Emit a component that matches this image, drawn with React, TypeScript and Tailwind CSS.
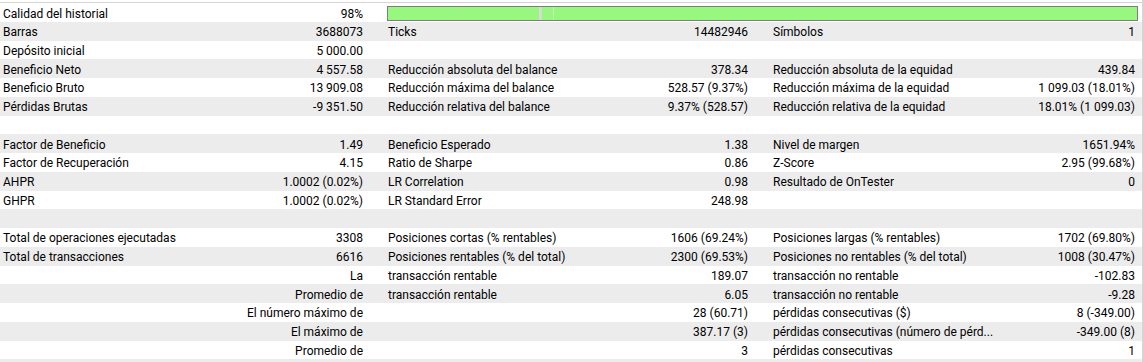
import React from 'react'

type Row = string[]

const rows: Row[] = [
  ['Barras', '3688073', 'Ticks', '14482946', 'Símbolos', '1'],
  ['Depósito inicial', '5 000.00', '', '', '', ''],
  ['Beneficio Neto', '4 557.58', 'Reducción absoluta del balance', '378.34', 'Reducción absoluta de la equidad', '439.84'],
  ['Beneficio Bruto', '13 909.08', 'Reducción máxima del balance', '528.57 (9.37%)', 'Reducción máxima de la equidad', '1 099.03 (18.01%)'],
  ['Pérdidas Brutas', '-9 351.50', 'Reducción relativa del balance', '9.37% (528.57)', 'Reducción relativa de la equidad', '18.01% (1 099.03)'],
  ['', '', '', '', '', ''],
  ['Factor de Beneficio', '1.49', 'Beneficio Esperado', '1.38', 'Nivel de margen', '1651.94%'],
  ['Factor de Recuperación', '4.15', 'Ratio de Sharpe', '0.86', 'Z-Score', '2.95 (99.68%)'],
  ['AHPR', '1.0002 (0.02%)', 'LR Correlation', '0.98', 'Resultado de OnTester', '0'],
  ['GHPR', '1.0002 (0.02%)', 'LR Standard Error', '248.98', '', ''],
  ['', '', '', '', '', ''],
  ['Total de operaciones ejecutadas', '3308', 'Posiciones cortas (% rentables)', '1606 (69.24%)', 'Posiciones largas (% rentables)', '1702 (69.80%)'],
  ['Total de transacciones', '6616', 'Posiciones rentables (% del total)', '2300 (69.53%)', 'Posiciones no rentables (% del total)', '1008 (30.47%)'],
  ['', 'La', 'transacción rentable', '189.07', 'transacción no rentable', '-102.83'],
  ['', 'Promedio de', 'transacción rentable', '6.05', 'transacción no rentable', '-9.28'],
  ['', 'El número máximo de', '', '28 (60.71)', 'pérdidas consecutivas ($)', '8 (-349.00)'],
  ['', 'El máximo de', '', '387.17 (3)', 'pérdidas consecutivas (número de pérd...', '-349.00 (8)'],
  ['', 'Promedio de', '', '3', 'pérdidas consecutivas', '1'],
  ['', '', '', '', '', ''],
]

const Cell = ({ label, value, last }: { label: string; value: string; last?: boolean }) => (
  <div className={`flex items-center justify-between pl-[3px] pt-[2px] ${last ? 'pr-[7px]' : 'pr-[22px]'}`}>
    <span className="whitespace-nowrap">{label}</span>
    <span className="whitespace-nowrap">{value}</span>
  </div>
)

const QualityBar = () => (
  <div className="flex h-[15px] ml-[2px] mr-[4px] border border-[#7d7d7d] bg-[#98f77f]">
    <div className="w-[69px]" />
    <div className="w-[6px] bg-[#9af581]" />
    <div className="w-[76px]" />
    <div className="w-[3px] bg-[#d6dcd2]" />
    <div className="w-[11px]" />
    <div className="w-[1px] bg-[#c6f5b8]" />
    <div className="flex-1" />
  </div>
)

export default function App() {
  return (
    <div className="w-[1143px] h-[362px] overflow-hidden bg-white text-[12px] text-black border-r border-[#d6d6d6]" style={{ fontFamily: 'Roboto, "Noto Sans", sans-serif' }}>
      <div className="h-[2px]" />
      <div className="h-[1px] bg-[#d4d4d4]" />
      <div className="grid grid-cols-[385px_385px_1fr] h-[18.75px] items-center bg-white">
        <Cell label="Calidad del historial" value="98%" />
        <div className="col-span-2">
          <QualityBar />
        </div>
      </div>
      {rows.map((r, i) => (
        <div key={i} className={`grid grid-cols-[385px_385px_1fr] h-[18.75px] leading-[16px] ${i % 2 === 0 ? 'bg-[#ececec]' : 'bg-white'}`}>
          <Cell label={r[0]} value={r[1]} />
          <Cell label={r[2]} value={r[3]} />
          <Cell label={r[4]} value={r[5]} last />
        </div>
      ))}
    </div>
  )
}
